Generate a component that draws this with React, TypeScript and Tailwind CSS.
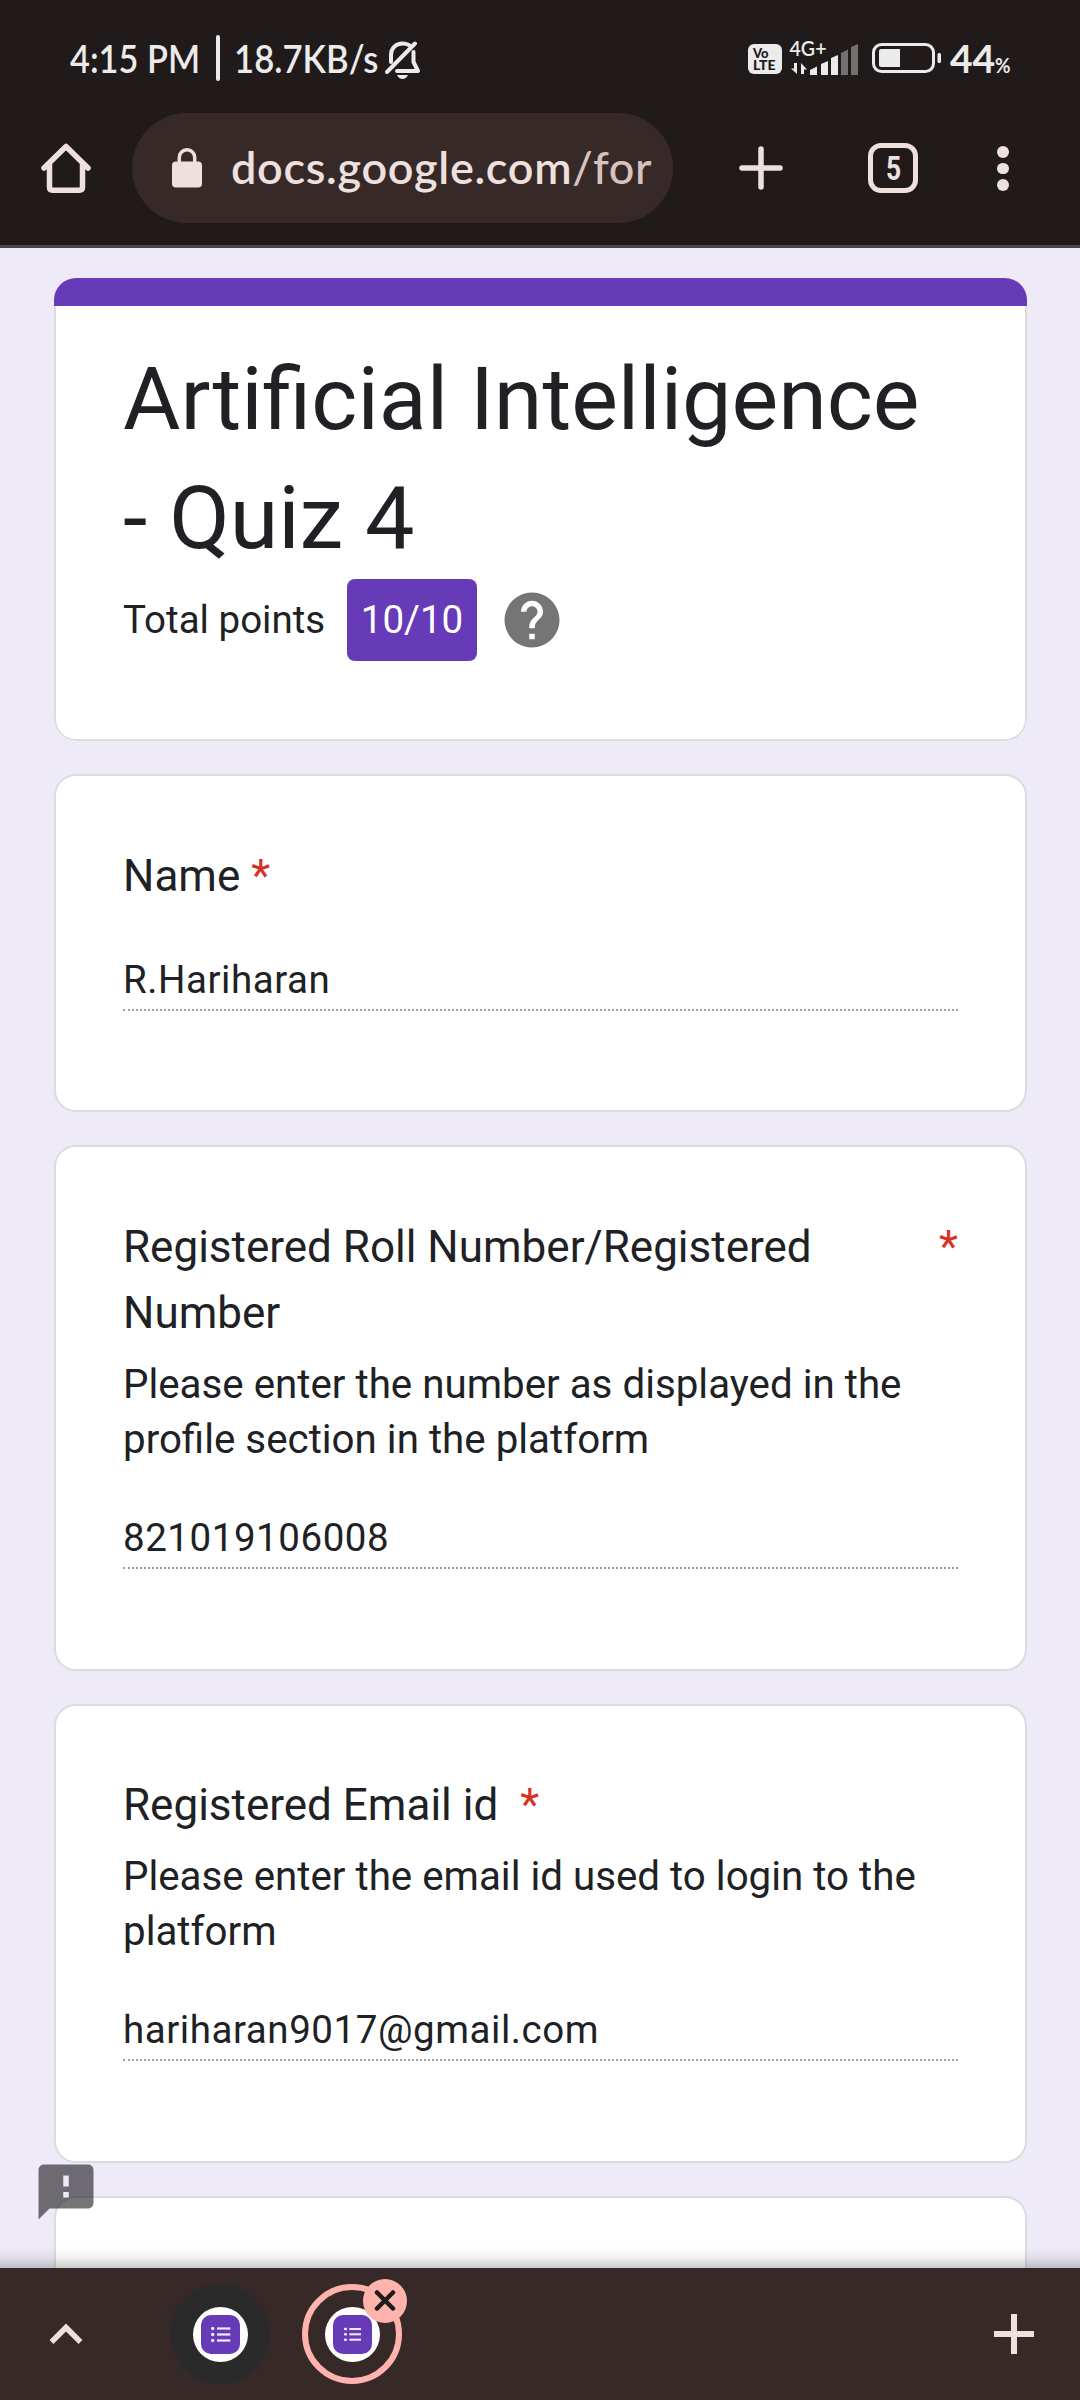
import React from "react";

function StatusBar() {
  return (
    <div className="flex h-[113px] items-start pt-[29px] pl-[70px] text-[#ebebeb]">
      <div className="flex h-[58px] w-[309px] shrink-0 items-center font-['Lato'] text-[39px] font-semibold whitespace-nowrap">
        <div className="w-[146px] shrink-0">
          <span className="inline-block origin-left scale-x-[0.88]">4:15 PM</span>
        </div>
        <span className="h-[46px] w-[4px] shrink-0 rounded-full bg-[#ebebeb]" />
        <div className="ml-[14px] w-[145px] shrink-0">
          <span className="inline-block origin-left scale-x-[0.89]">18.7KB/s</span>
        </div>
      </div>
      <svg className="mt-[11px] ml-[5px]" width="38" height="40" viewBox="0 0 38 40" fill="none" stroke="#ebebeb" strokeWidth="4" strokeLinecap="round" strokeLinejoin="round">
        <path d="M7 22V15C7 8 12 3.500 18.500 3.500Q22 3.500 25 5" />
        <path d="M29.500 12V22L34 31H13" />
        <path d="M3 32L31 3.500" />
        <path d="M13 35H24Q22 39 18.500 39Q15 39 13 35Z" fill="#ebebeb" stroke="none" />
      </svg>
      <div className="ml-auto flex h-[58px] items-center pr-[67px]">
        <div className="mt-[2px] flex h-[30px] w-[34px] flex-col items-start justify-center rounded-[6px] bg-[#ebebeb] pl-[5px] font-['Lato'] text-[14px] leading-[12px] font-black text-[#201a1a]">
          <span className="text-[13px] leading-[11px]">Vo</span>
          <span>LTE</span>
        </div>
        <svg className="ml-[7px] overflow-visible" width="70" height="44" viewBox="789 36 70 44">
          <text x="789.500" y="56" fontFamily="Lato" fontSize="21" fontWeight="600" fill="#ebebeb" textLength="37" lengthAdjust="spacingAndGlyphs">4G+</text>
          <path d="M797 63V74L791 68.500H794V63ZM801 74V63L807 69.500H804V74Z" fill="#ebebeb" />
          <g fill="#ebebeb">
            <path d="M810 70L817 66.500V75H810Z" />
            <path d="M821 64L828 61V75H821Z" />
            <path d="M831 58L838 55V75H831Z" />
          </g>
          <g fill="#757070">
            <path d="M841 53L848 49.500V75H841Z" />
            <path d="M851 47L858 44V75H851Z" />
          </g>
        </svg>
        <svg className="ml-[13px]" width="70" height="30" viewBox="0 0 70 30">
          <rect x="1.500" y="1.500" width="60" height="27" rx="8" fill="none" stroke="#ebebeb" strokeWidth="3" />
          <path d="M9 6H28V24H9Q7 24 7 22V8Q7 6 9 6Z" fill="#ebebeb" />
          <rect x="65.500" y="10" width="3.500" height="10" rx="1.500" fill="#ebebeb" />
        </svg>
        <div className="ml-[8px] flex w-[63px] items-baseline font-['Lato'] font-bold whitespace-nowrap">
          <span className="text-[39px]">44</span>
          <span className="inline-block origin-left scale-x-[0.88] text-[21.5px]">%</span>
        </div>
      </div>
    </div>
  );
}

function BrowserBar() {
  return (
    <div className="flex h-[135px] items-start border-b-[3px] border-[#524343]">
      <svg className="mt-[30px] ml-[41px]" width="50" height="50" viewBox="0 0 50 50" fill="none" stroke="#ede0df" strokeWidth="5.500" strokeLinecap="round" strokeLinejoin="round">
        <path d="M3 25L25 3.500L47 25M8.500 21V44Q8.500 47.200 11.500 47.200H38.500Q41.500 47.200 41.500 44V21" />
      </svg>
      <div className="ml-[41px] flex h-[110px] w-[541px] items-center rounded-full bg-[#382929] pl-[40px]">
        <svg width="30" height="40" viewBox="0 0 30 40">
          <rect y="13.500" width="30" height="26" rx="4" fill="#ede0df" />
          <path d="M7.300 15V9.500A7.700 7.700 0 0 1 22.700 9.500V15" fill="none" stroke="#ede0df" strokeWidth="3.500" />
        </svg>
        <div className="ml-[29px] w-[428px] font-['Lato'] text-[45px] font-semibold tracking-[0.7px] whitespace-nowrap text-[#ede0df]">
          docs.google.com<span className="font-medium text-[#d8c2c0]">/for</span>
        </div>
      </div>
      <svg className="mt-[33px] ml-[66px]" width="44" height="44" viewBox="0 0 44 44" stroke="#ede0df" strokeWidth="5.500" strokeLinecap="round">
        <path d="M22 3V41M3 22H41" />
      </svg>
      <div className="mt-[30px] ml-[85px] flex size-[50px] items-center justify-center rounded-[13px] border-[5.5px] border-[#ede0df] font-['Roboto'] text-[33px] leading-none font-bold text-[#ede0df]">
        <span className="scale-x-[0.8]">5</span>
      </div>
      <div className="mt-[33px] ml-[79px] flex flex-col gap-[5px]">
        <span className="size-[11.500px] rounded-full bg-[#ede0df]" />
        <span className="size-[11.500px] rounded-full bg-[#ede0df]" />
        <span className="size-[11.500px] rounded-full bg-[#ede0df]" />
      </div>
    </div>
  );
}

const card = "rounded-[22px] border-2 border-[#dadce0] bg-white px-[67px]";

function Answer({ children }: { children: React.ReactNode }) {
  return (
    <div className="h-[55px] border-b-2 border-dotted border-[#9e9e9e] text-[38.5px] leading-[47px] tracking-[0.55px]">
      {children}
    </div>
  );
}

function FormsTab({ small = false }: { small?: boolean }) {
  return (
    <div className="flex size-[55px] items-center justify-center rounded-full bg-white">
      <svg width="39" height="39" viewBox="0 0 39 39">
        <rect width="39" height="39" rx="10" fill="#673ab7" />
        {small ? (
          <g fill="#f1ebfa">
            <rect x="11" y="12.700" width="3" height="2.600" rx="0.800" />
            <rect x="11" y="18" width="3" height="2.600" rx="0.800" />
            <rect x="11" y="23.400" width="3" height="2.600" rx="0.800" />
            <rect x="16.300" y="13" width="11.700" height="2" />
            <rect x="16.300" y="18.300" width="11.700" height="2" />
            <rect x="16.300" y="23.700" width="11.700" height="2" />
          </g>
        ) : (
          <g fill="#f1ebfa">
            <circle cx="11.700" cy="13.500" r="1.700" />
            <circle cx="11.700" cy="19.500" r="1.700" />
            <circle cx="11.700" cy="25.500" r="1.700" />
            <rect x="16" y="12.400" width="13.300" height="2.200" />
            <rect x="16" y="18.400" width="13.300" height="2.200" />
            <rect x="16" y="24.400" width="13.300" height="2.200" />
          </g>
        )}
      </svg>
    </div>
  );
}

export default function App() {
  return (
    <div className="flex h-[2400px] w-[1080px] flex-col overflow-hidden bg-[#201a1a]">
      <StatusBar />
      <BrowserBar />
      <main className="relative h-[2020px] overflow-hidden bg-[#eeeaf7] px-[54px] pt-[30px] font-['Roboto'] text-[#202124]">
        <div className="flex w-[973px] flex-col gap-[33px]">
          <section className="h-[463px] overflow-hidden rounded-[22px] bg-white">
            <div className="h-[28px] bg-[#673ab7]" />
            <div className="h-[435px] rounded-b-[22px] border-2 border-t-0 border-[#dadce0] px-[67px] pt-[33px]">
              <h1 className="text-[88px] leading-[119px]">Artificial Intelligence<br />- Quiz 4</h1>
              <div className="mt-[2px] flex h-[82px] items-center text-[38.5px]">
                <span className="w-[224px]">Total points</span>
                <span className="flex h-[82px] w-[130px] items-center justify-center rounded-[8px] bg-[#673ab7] text-white">10/10</span>
                <svg className="ml-[22px]" width="66" height="66" viewBox="0 0 24 24" fill="#757575">
                  <path d="M12 2C6.480 2 2 6.480 2 12s4.480 10 10 10 10-4.480 10-10S17.520 2 12 2zm1 17h-2v-2h2v2zm2.070-7.750l-.9.920C13.450 12.900 13 13.500 13 15h-2v-.5c0-1.100.45-2.100 1.170-2.830l1.240-1.260c.37-.36.59-.86.59-1.410 0-1.100-.9-2-2-2s-2 .9-2 2H8c0-2.210 1.790-4 4-4s4 1.790 4 4c0 .88-.36 1.680-.93 2.250z" />
                </svg>
              </div>
            </div>
          </section>

          <section className={card + " h-[338px] pt-[67px]"}>
            <h2 className="mb-[47px] text-[44px] leading-[66px]">
              Name <span className="text-[#d93025]">*</span>
            </h2>
            <Answer>R.Hariharan</Answer>
          </section>

          <section className={card + " h-[526px] pt-[67px]"}>
            <div className="flex justify-between text-[44px] leading-[66px]">
              <h2 className="w-[760px]">Registered Roll Number/Registered Number</h2>
              <span className="text-[#d93025]">*</span>
            </div>
            <p className="mt-[11px] mb-[47px] text-[40.3px] leading-[55px]">Please enter the number as displayed in the profile section in the platform</p>
            <Answer>821019106008</Answer>
          </section>

          <section className={card + " h-[459px] pt-[66px]"}>
            <h2 className="text-[44px] leading-[66px]">
              Registered Email id <span className="ml-[11px] text-[#d93025]">*</span>
            </h2>
            <p className="mt-[11px] mb-[47px] text-[40.3px] leading-[55px]">Please enter the email id used to login to the platform</p>
            <Answer>hariharan9017@gmail.com</Answer>
          </section>

          <section className={card + " h-[300px]"} />
        </div>

        <svg className="absolute top-[1911px] left-[33px]" width="66" height="66" viewBox="0 0 24 24" fill="#000000" fillOpacity="0.54">
          <path d="M20 2H4c-1.100 0-1.990.9-1.990 2L2 22l4-4h14c1.100 0 2-.9 2-2V4c0-1.100-.9-2-2-2zm-7 12h-2v-2h2v2zm0-4h-2V6h2v4z" />
        </svg>
        <div className="absolute inset-x-0 bottom-0 h-[22px] bg-linear-to-b from-black/0 via-black/5 to-black/20" />
      </main>

      <footer className="flex h-[132px] items-center bg-[#382929]">
        <svg className="ml-[49px]" width="34" height="22" viewBox="0 0 34 22" fill="none" stroke="#ede0df" strokeWidth="5.500">
          <path d="M2.500 19L17 4.500L31.500 19" />
        </svg>
        <div className="ml-[87px] flex size-[100px] items-center justify-center rounded-full bg-[#2a2a2a]">
          <FormsTab />
        </div>
        <div className="relative ml-[32px] flex size-[100px] items-center justify-center rounded-full border-[6px] border-[#ffb3ac]">
          <FormsTab small />
          <div className="absolute -top-[11px] left-[55px] flex size-[44px] items-center justify-center rounded-full bg-[#ffb3ac]">
            <svg width="22" height="22" viewBox="0 0 22 22" stroke="#201a1a" strokeWidth="4.500" strokeLinecap="round">
              <path d="M3 2.500L19 18.500M19 2.500L3 18.500" />
            </svg>
          </div>
        </div>
        <svg className="mr-[46px] ml-auto" width="40" height="40" viewBox="0 0 40 40" stroke="#ede0df" strokeWidth="6">
          <path d="M20 0V40M0 20H40" />
        </svg>
      </footer>
    </div>
  );
}
